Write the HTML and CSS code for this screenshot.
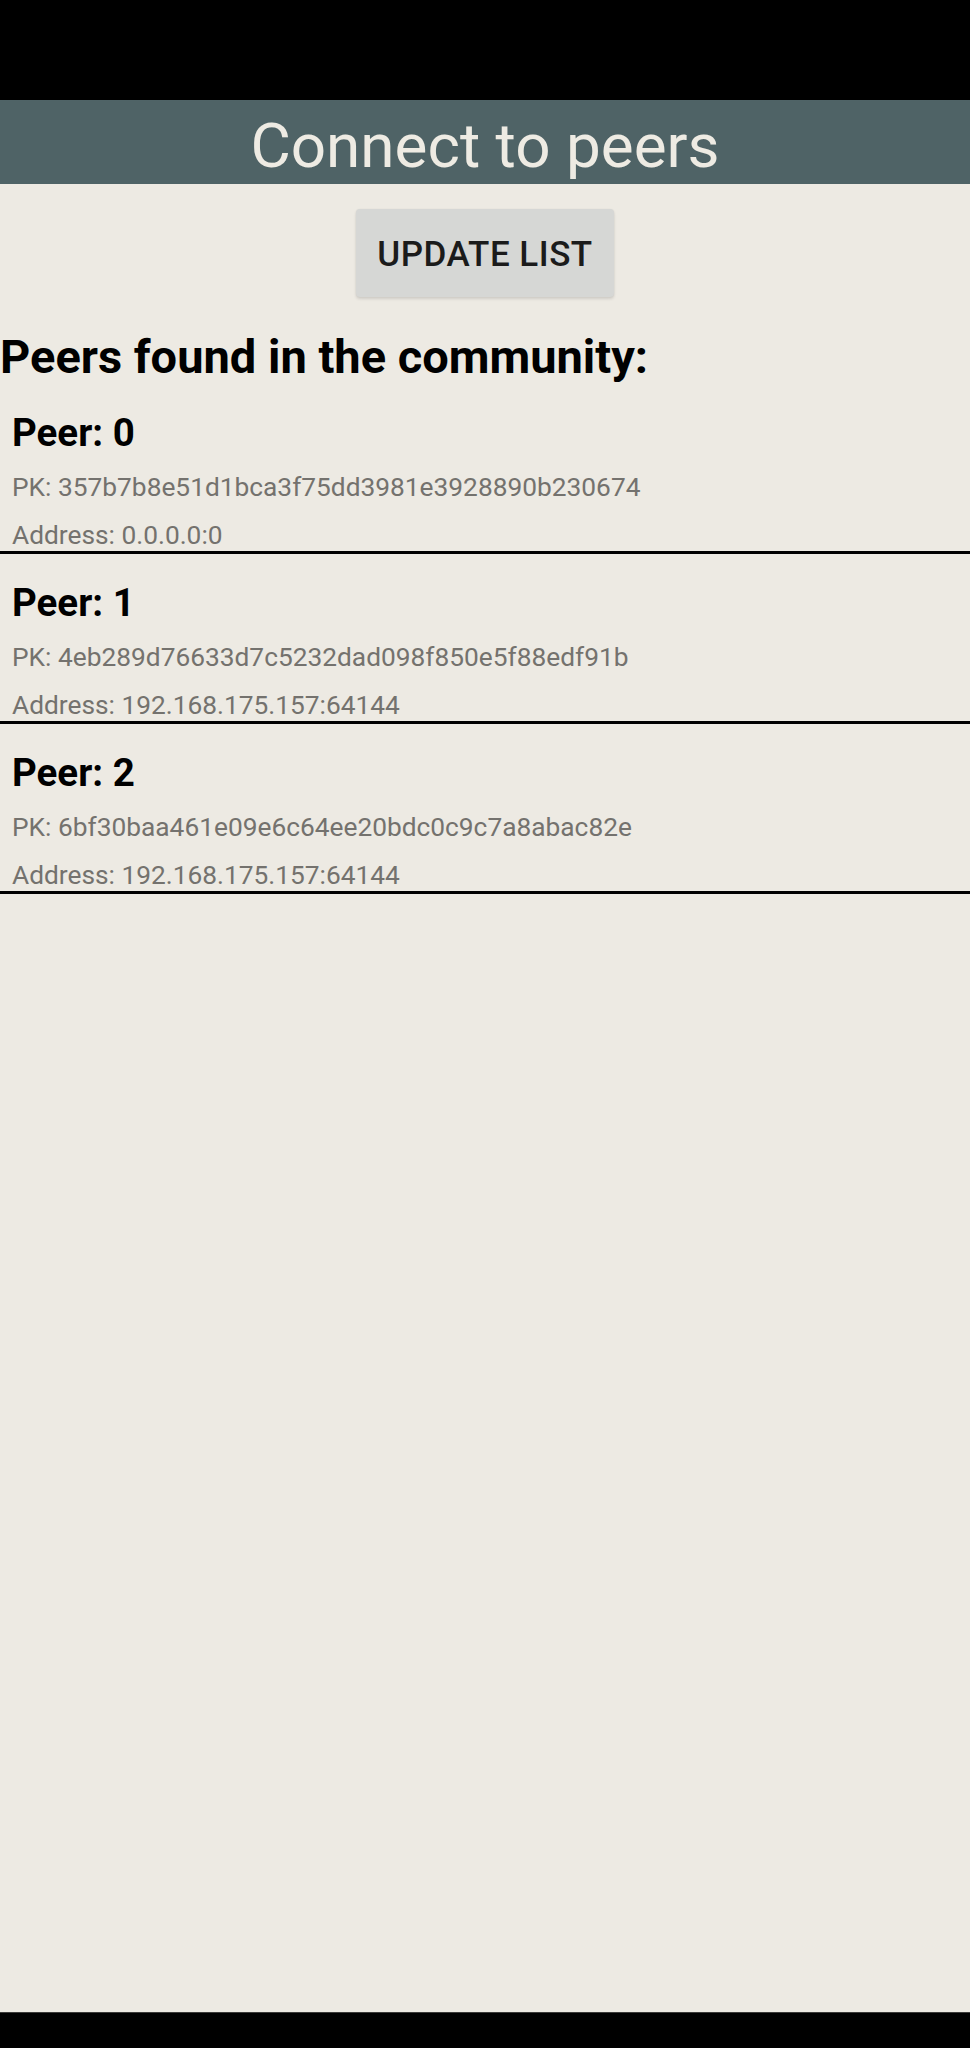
FILE: index.html
```html
<!DOCTYPE html>
<html lang="en">
<head>
<meta charset="utf-8">
<title>Connect to peers</title>
<link rel="stylesheet" href="styles.css">
</head>
<body>
<div class="screen">
  <div class="status-bar"></div>
  <header class="app-bar">
    <h1 class="app-title">Connect to peers</h1>
  </header>
  <main class="content">
    <div class="actions">
      <button class="btn" type="button">UPDATE LIST</button>
    </div>
    <h2 class="section-title">Peers found in the community:</h2>
    <ul class="peer-list">
      <li class="peer">
        <div class="peer-name">Peer: 0</div>
        <div class="peer-meta peer-pk">PK: 357b7b8e51d1bca3f75dd3981e3928890b230674</div>
        <div class="peer-meta peer-addr">Address: 0.0.0.0:0</div>
      </li>
      <li class="peer">
        <div class="peer-name">Peer: 1</div>
        <div class="peer-meta peer-pk">PK: 4eb289d76633d7c5232dad098f850e5f88edf91b</div>
        <div class="peer-meta peer-addr">Address: 192.168.175.157:64144</div>
      </li>
      <li class="peer">
        <div class="peer-name">Peer: 2</div>
        <div class="peer-meta peer-pk">PK: 6bf30baa461e09e6c64ee20bdc0c9c7a8abac82e</div>
        <div class="peer-meta peer-addr">Address: 192.168.175.157:64144</div>
      </li>
    </ul>
  </main>
  <div class="nav-bar"></div>
</div>
</body>
</html>
```
FILE: styles.css
```css
* {
  box-sizing: border-box;
}

html, body {
  margin: 0;
  padding: 0;
}

body {
  font-family: Roboto, "Noto Sans", "Liberation Sans", sans-serif;
  background: #000;
}

.screen {
  display: flex;
  flex-direction: column;
  height: 2048px;
  width: 970px;
}

.status-bar {
  height: 100px;
  background: #000;
  flex: none;
}

.app-bar {
  flex: none;
  height: 84px;
  background: #4f6366;
  padding: 10px 0 3px;
  display: flex;
  justify-content: center;
}

.app-title {
  margin: 0;
  font-size: 62px;
  font-weight: 400;
  line-height: 71px;
  color: #eeebe3;
}

.content {
  flex: 1;
  background: #edeae3;
}

.actions {
  display: flex;
  justify-content: center;
  padding-top: 25px;
}

.btn {
  width: 258px;
  height: 88px;
  padding: 3px 0 0;
  border: none;
  border-radius: 4px;
  background: #d6d7d5;
  box-shadow: 0 2px 3px rgba(0, 0, 0, 0.12), 0 0 2px rgba(0, 0, 0, 0.06);
  font-family: Roboto, "Noto Sans", "Liberation Sans", sans-serif;
  font-size: 35px;
  font-weight: 500;
  letter-spacing: 0.5px;
  color: #1b1b1b;
}

.section-title {
  margin: 33px 0 0;
  font-size: 47px;
  font-weight: 700;
  line-height: 54px;
  color: #000;
}

.peer-list {
  list-style: none;
  margin: 0;
  padding: 0;
}

.peer {
  padding: 27px 12px 0;
  border-bottom: 3px solid #000;
}

.peer-name {
  font-size: 38.5px;
  font-weight: 700;
  line-height: 43px;
  color: #000;
}

.peer-meta {
  font-size: 26.3px;
  line-height: 31px;
  color: #74726e;
}

.peer-pk {
  margin-top: 18px;
}

.peer-addr {
  margin-top: 17px;
}

.nav-bar {
  flex: none;
  height: 36px;
  background: #000;
  border-top: 1px solid #3c3c3a;
}
```
